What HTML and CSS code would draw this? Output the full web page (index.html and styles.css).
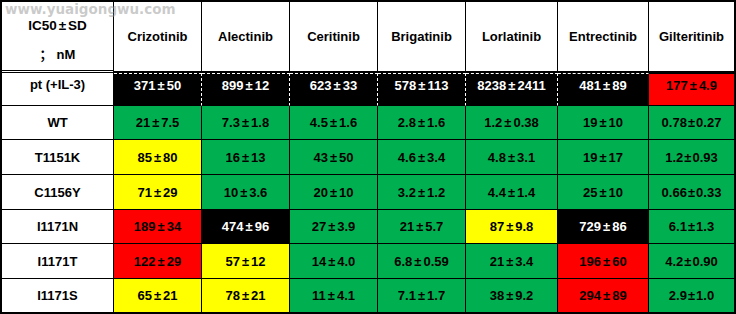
FILE: index.html
```html
<!DOCTYPE html>
<html>
<head>
<meta charset="utf-8">
<link rel="stylesheet" href="styles.css">
</head>
<body>
<div class="wrap">
  <div class="grid">
    <div class="c hd first"><div class="ic">IC50<span class="pm">±</span>SD</div><div class="nm"><span class="semi">；</span>nM</div></div>
    <div class="c hd">Crizotinib</div>
    <div class="c hd">Alectinib</div>
    <div class="c hd">Ceritinib</div>
    <div class="c hd">Brigatinib</div>
    <div class="c hd">Lorlatinib</div>
    <div class="c hd">Entrectinib</div>
    <div class="c hd last">Gilteritinib</div>

    <div class="c pt lab">pt (+IL-3)</div>
    <div class="c pt blk dash">371<span class="pm">±</span>50</div>
    <div class="c pt blk dash">899<span class="pm">±</span>12</div>
    <div class="c pt blk dash">623<span class="pm">±</span>33</div>
    <div class="c pt blk dash">578<span class="pm">±</span>113</div>
    <div class="c pt blk dash">8238<span class="pm">±</span>2411</div>
    <div class="c pt blk">481<span class="pm">±</span>89</div>
    <div class="c pt red last">177<span class="pm">±</span>4.9</div>

    <div class="c lab">WT</div>
    <div class="c grn">21<span class="pm">±</span>7.5</div>
    <div class="c grn">7.3<span class="pm">±</span>1.8</div>
    <div class="c grn">4.5<span class="pm">±</span>1.6</div>
    <div class="c grn">2.8<span class="pm">±</span>1.6</div>
    <div class="c grn">1.2<span class="pm">±</span>0.38</div>
    <div class="c grn">19<span class="pm">±</span>10</div>
    <div class="c grn last">0.78<span class="pm n">±</span>0.27</div>

    <div class="c lab">T1151K</div>
    <div class="c yel">85<span class="pm">±</span>80</div>
    <div class="c grn">16<span class="pm">±</span>13</div>
    <div class="c grn">43<span class="pm">±</span>50</div>
    <div class="c grn">4.6<span class="pm">±</span>3.4</div>
    <div class="c grn">4.8<span class="pm">±</span>3.1</div>
    <div class="c grn">19<span class="pm">±</span>17</div>
    <div class="c grn last">1.2<span class="pm n">±</span>0.93</div>

    <div class="c lab">C1156Y</div>
    <div class="c yel">71<span class="pm">±</span>29</div>
    <div class="c grn">10<span class="pm">±</span>3.6</div>
    <div class="c grn">20<span class="pm">±</span>10</div>
    <div class="c grn">3.2<span class="pm">±</span>1.2</div>
    <div class="c grn">4.4<span class="pm">±</span>1.4</div>
    <div class="c grn">25<span class="pm">±</span>10</div>
    <div class="c grn last">0.66<span class="pm n">±</span>0.33</div>

    <div class="c lab">I1171N</div>
    <div class="c red">189<span class="pm">±</span>34</div>
    <div class="c blk">474<span class="pm">±</span>96</div>
    <div class="c grn">27<span class="pm">±</span>3.9</div>
    <div class="c grn">21<span class="pm">±</span>5.7</div>
    <div class="c yel">87<span class="pm">±</span>9.8</div>
    <div class="c blk">729<span class="pm">±</span>86</div>
    <div class="c grn last">6.1<span class="pm n">±</span>1.3</div>

    <div class="c lab">I1171T</div>
    <div class="c red">122<span class="pm">±</span>29</div>
    <div class="c yel">57<span class="pm">±</span>12</div>
    <div class="c grn">14<span class="pm">±</span>4.0</div>
    <div class="c grn">6.8<span class="pm">±</span>0.59</div>
    <div class="c grn">21<span class="pm">±</span>3.4</div>
    <div class="c red">196<span class="pm">±</span>60</div>
    <div class="c grn last">4.2<span class="pm n">±</span>0.90</div>

    <div class="c lab bot">I1171S</div>
    <div class="c yel bot">65<span class="pm">±</span>21</div>
    <div class="c yel bot">78<span class="pm">±</span>21</div>
    <div class="c grn bot">11<span class="pm">±</span>4.1</div>
    <div class="c grn bot">7.1<span class="pm">±</span>1.7</div>
    <div class="c grn bot">38<span class="pm">±</span>9.2</div>
    <div class="c red bot">294<span class="pm">±</span>89</div>
    <div class="c grn last bot">2.9<span class="pm n">±</span>1.0</div>
  </div>
  <div class="wm">www.yuaigongwu.com</div>
</div>
</body>
</html>
```
FILE: styles.css
```css
html, body {
  margin: 0;
  padding: 0;
  background: #fff;
}
.wrap {
  position: relative;
  width: 736px;
  height: 314px;
}
.grid {
  box-sizing: border-box;
  width: 736px;
  height: 314px;
  border: 2px solid #000;
  display: grid;
  grid-template-columns: 112px 88px 88px 88px 88px 92px 91px 85px;
  grid-template-rows: 71px 33px 34px 35px 35px 34px 35px 33px;
  font-family: "Liberation Sans", Arial, sans-serif;
  font-weight: bold;
  font-size: 13px;
  color: #000;
}
.c {
  box-sizing: border-box;
  border-right: 1px solid #000;
  border-bottom: 1px solid #000;
  display: flex;
  align-items: center;
  justify-content: center;
  white-space: nowrap;
}
.c.last { border-right: none; }
.c.bot { border-bottom: none; }
.hd {
  background: #fff;
  border-bottom: 2px solid #000;
}
.hd.first {
  border-bottom: 3px double #000;
  flex-direction: column;
  gap: 13px;
  padding-top: 8px;
}
.ic { font-size: 13.5px; line-height: 15px; }
.nm { line-height: 15px; }
.semi {
  font-family: "Noto Sans CJK SC", sans-serif;
  font-weight: bold;
  margin-right: 4px;
}
.pm { margin: 0 2px; }
.pm.n { margin: 0 1px; }
.pt { padding-bottom: 9px; }
.lab { background: #fff; }
.blk { background: #000; color: #fff; }
.pt.blk { border-top: 1px dashed #fff; }
.dash { border-right: 1px dashed #fff; }
.grn { background: #00b050; }
.yel { background: #ffff00; }
.red { background: #ff0000; }
.pt.red { border-top: 1px solid #000; }
.wm {
  position: absolute;
  left: 5px;
  top: 2px;
  font-family: "DejaVu Sans", sans-serif;
  font-weight: bold;
  font-size: 13.5px;
  line-height: 14px;
  color: rgba(150, 150, 150, 0.5);
  pointer-events: none;
}
```
